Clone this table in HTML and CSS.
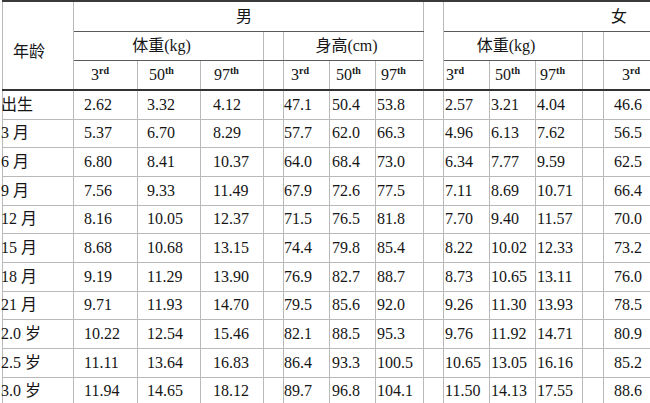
FILE: index.html
```html
<!DOCTYPE html>
<html lang="zh-CN">
<head>
<meta charset="utf-8">
<title>0-3岁儿童体重身高百分位</title>
<link rel="stylesheet" href="styles.css">
</head>
<body>
<table class="grid">
  <colgroup>
    <col class="c-age">
    <col class="c-w1"><col class="c-w2"><col class="c-w3">
    <col class="c-sp">
    <col class="c-h1"><col class="c-h2"><col class="c-h3">
    <col class="c-sp">
    <col class="c-f1"><col class="c-f2"><col class="c-f3">
    <col class="c-sp2">
    <col class="c-g1">
  </colgroup>
  <thead>
    <tr class="hr1">
      <th class="age" rowspan="3">年龄</th>
      <th class="sex male" colspan="7">男</th>
      <th class="gap" rowspan="3"></th>
      <th class="sex female" colspan="5">女</th>
    </tr>
    <tr class="hr2">
      <th class="grp" colspan="3">体重(kg)</th>
      <th class="gap"></th>
      <th class="grp" colspan="3">身高(cm)</th>
      <th class="grp" colspan="3">体重(kg)</th>
      <th class="gap"></th>
      <th class="gap"></th>
    </tr>
    <tr class="hr3">
      <th class="pc">3<sup>rd</sup></th>
      <th class="pc">50<sup>th</sup></th>
      <th class="pc">97<sup>th</sup></th>
      <th class="gap"></th>
      <th class="pc">3<sup>rd</sup></th>
      <th class="pc">50<sup>th</sup></th>
      <th class="pc">97<sup>th</sup></th>
      <th class="pc">3<sup>rd</sup></th>
      <th class="pc">50<sup>th</sup></th>
      <th class="pc">97<sup>th</sup></th>
      <th class="gap"></th>
      <th class="pc">3<sup>rd</sup></th>
    </tr>
  </thead>
  <tbody>
    <tr><td>出生</td><td>2.62</td><td>3.32</td><td>4.12</td><td></td><td>47.1</td><td>50.4</td><td>53.8</td><td></td><td>2.57</td><td>3.21</td><td>4.04</td><td></td><td>46.6</td></tr>
    <tr><td>3 月</td><td>5.37</td><td>6.70</td><td>8.29</td><td></td><td>57.7</td><td>62.0</td><td>66.3</td><td></td><td>4.96</td><td>6.13</td><td>7.62</td><td></td><td>56.5</td></tr>
    <tr><td>6 月</td><td>6.80</td><td>8.41</td><td>10.37</td><td></td><td>64.0</td><td>68.4</td><td>73.0</td><td></td><td>6.34</td><td>7.77</td><td>9.59</td><td></td><td>62.5</td></tr>
    <tr><td>9 月</td><td>7.56</td><td>9.33</td><td>11.49</td><td></td><td>67.9</td><td>72.6</td><td>77.5</td><td></td><td>7.11</td><td>8.69</td><td>10.71</td><td></td><td>66.4</td></tr>
    <tr><td>12 月</td><td>8.16</td><td>10.05</td><td>12.37</td><td></td><td>71.5</td><td>76.5</td><td>81.8</td><td></td><td>7.70</td><td>9.40</td><td>11.57</td><td></td><td>70.0</td></tr>
    <tr><td>15 月</td><td>8.68</td><td>10.68</td><td>13.15</td><td></td><td>74.4</td><td>79.8</td><td>85.4</td><td></td><td>8.22</td><td>10.02</td><td>12.33</td><td></td><td>73.2</td></tr>
    <tr><td>18 月</td><td>9.19</td><td>11.29</td><td>13.90</td><td></td><td>76.9</td><td>82.7</td><td>88.7</td><td></td><td>8.73</td><td>10.65</td><td>13.11</td><td></td><td>76.0</td></tr>
    <tr><td>21 月</td><td>9.71</td><td>11.93</td><td>14.70</td><td></td><td>79.5</td><td>85.6</td><td>92.0</td><td></td><td>9.26</td><td>11.30</td><td>13.93</td><td></td><td>78.5</td></tr>
    <tr><td>2.0 岁</td><td>10.22</td><td>12.54</td><td>15.46</td><td></td><td>82.1</td><td>88.5</td><td>95.3</td><td></td><td>9.76</td><td>11.92</td><td>14.71</td><td></td><td>80.9</td></tr>
    <tr><td>2.5 岁</td><td>11.11</td><td>13.64</td><td>16.83</td><td></td><td>86.4</td><td>93.3</td><td>100.5</td><td></td><td>10.65</td><td>13.05</td><td>16.16</td><td></td><td>85.2</td></tr>
    <tr><td>3.0 岁</td><td>11.94</td><td>14.65</td><td>18.12</td><td></td><td>89.7</td><td>96.8</td><td>104.1</td><td></td><td>11.50</td><td>14.13</td><td>17.55</td><td></td><td>88.6</td></tr>
  </tbody>
</table>
</body>
</html>
```

FILE: styles.css
```css
html, body {
  margin: 0;
  padding: 0;
  background: #ffffff;
  overflow: hidden;
}

body {
  font-family: "Liberation Serif", "Noto Sans CJK SC", serif;
  color: #151515;
}

.grid {
  border-collapse: collapse;
  table-layout: fixed;
  width: 650px;
  margin-left: 2px;
  border-top: 2px solid #3a3a3a;
}

.c-age { width: 71px; }
.c-w1 { width: 64px; }
.c-w2 { width: 63px; }
.c-w3 { width: 63px; }
.c-sp { width: 20px; }
.c-h1 { width: 46px; }
.c-h2 { width: 46px; }
.c-h3 { width: 48px; }
.c-f1 { width: 46px; }
.c-f2 { width: 46px; }
.c-f3 { width: 47px; }
.c-sp2 { width: 21px; }
.c-g1 { width: 49px; }

.grid th,
.grid td {
  border: 1px solid #b9b9b9;
  padding: 0;
  font-size: 16px;
  font-weight: normal;
  white-space: nowrap;
  text-align: left;
  vertical-align: middle;
  line-height: 18px;
}

/* header */
.grid .hr1 th { height: 29px; }
.grid .hr2 th { height: 28px; }
.grid .hr3 th { height: 28px; }

.grid .sex,
.grid .hr2 th {
  border-bottom: 1px solid #5a5a5a;
}

.grid .hr3 th,
.grid .age,
.grid .hr1 .gap {
  border-bottom: 2px solid #333333;
}

.grid .age {
  padding: 13px 0 0 10px;
}

.grid .male { padding-left: 162px; }
.grid .female { padding-left: 167px; }

.grid .grp {
  text-align: center;
  padding-right: 14px;
}

.grid .pc sup {
  font-size: 10px;
  font-weight: bold;
  vertical-align: 6px;
  line-height: 0;
}

.grid .hr3 th:nth-child(1) { padding-left: 17px; }
.grid .hr3 th:nth-child(2) { padding-left: 11px; }
.grid .hr3 th:nth-child(3) { padding-left: 13px; }
.grid .hr3 th:nth-child(5) { padding-left: 7px; }
.grid .hr3 th:nth-child(6) { padding-left: 6px; }
.grid .hr3 th:nth-child(7) { padding-left: 5px; }
.grid .hr3 th:nth-child(8) { padding-left: 2px; }
.grid .hr3 th:nth-child(9) { padding-left: 5px; }
.grid .hr3 th:nth-child(10) { padding-left: 4px; }
.grid .hr3 th:nth-child(12) { padding-left: 18px; }

/* body */
.grid tbody td { height: 27.67px; }

.grid tbody td:nth-child(1) { text-indent: -2px; }
.grid tbody td:nth-child(2) { padding-left: 10px; }
.grid tbody td:nth-child(3) { padding-left: 9px; }
.grid tbody td:nth-child(4) { padding-left: 12px; }
.grid tbody td:nth-child(6) { padding-left: 0; }
.grid tbody td:nth-child(7) { padding-left: 2px; }
.grid tbody td:nth-child(8) { padding-left: 1px; }
.grid tbody td:nth-child(10) { padding-left: 1px; }
.grid tbody td:nth-child(11) { padding-left: 1px; }
.grid tbody td:nth-child(12) { padding-left: 1px; }
.grid tbody td:nth-child(14) { padding-left: 10px; }
```
